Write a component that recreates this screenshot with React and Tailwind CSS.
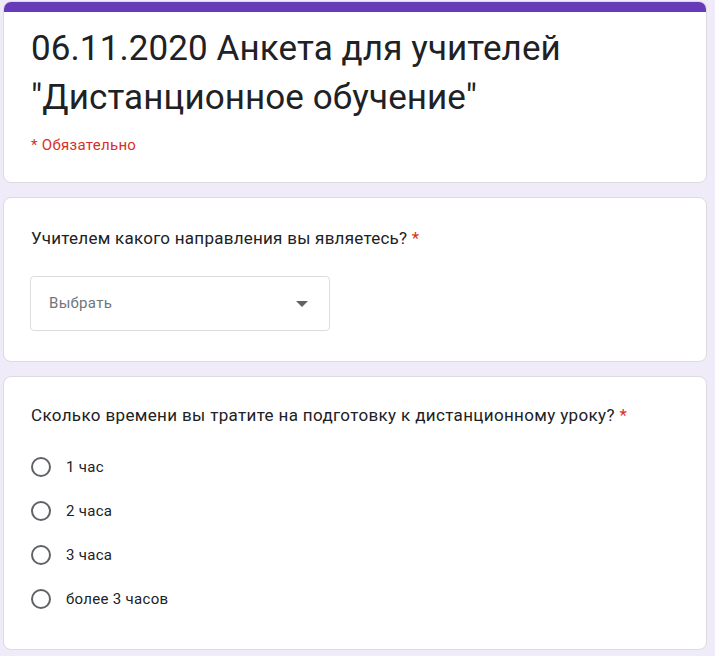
import React from "react";

function Radio({ label }) {
  return (
    <div className="flex items-center h-[44px]">
      <div className="w-[20px] h-[20px] rounded-full border-2 border-[#5f6368] ml-[28px]" />
      <span className="ml-[15px] text-[15px] tracking-[0.3px] text-[#202124]">{label}</span>
    </div>
  );
}

export default function App() {
  return (
    <div
      className="w-[715px] h-[656px] bg-[#f0ebf8] pt-px pl-[3px] pr-[8px] overflow-hidden"
      style={{ fontFamily: "Roboto, 'Noto Sans', sans-serif" }}
    >
      <div className="rounded-lg bg-white border border-[#dadce0] overflow-hidden h-[182px]">
        <div className="h-[10px] bg-[#673ab7]" />
        <div className="pl-[27px] pt-[12px]">
          <h1 className="text-[35px] leading-[49px] text-[#202124] font-normal tracking-[0.1px]">
            06.11.2020 Анкета для учителей
            <br />
            "Дистанционное обучение"
          </h1>
          <div className="mt-[13px] text-[15px] leading-[20px] tracking-[0.3px] text-[#d93025]">* Обязательно</div>
        </div>
      </div>

      <div className="mt-[14px] rounded-lg bg-white border border-[#dadce0] h-[165px] pl-[27px] pt-[28px]">
        <div className="text-[17px] leading-[24px] tracking-[0.25px] text-[#202124]">
          Учителем какого направления вы являетесь? <span className="text-[#d93025]">*</span>
        </div>
        <div className="mt-[26px] w-[300px] h-[55px] border border-[#dadce0] rounded flex items-center justify-between pl-[18px] pr-[21px] -ml-px">
          <span className="text-[15px] tracking-[0.3px] text-[#70757a]">Выбрать</span>
          <svg width="12" height="6" viewBox="0 0 12 6">
            <path d="M0 0 L12 0 L6 6 Z" fill="#5f6368" />
          </svg>
        </div>
      </div>

      <div className="mt-[14px] rounded-lg bg-white border border-[#dadce0] h-[274px] pt-[26px]">
        <div className="pl-[27px] text-[17px] leading-[24px] tracking-[0.35px] text-[#202124]">
          Сколько времени вы тратите на подготовку к дистанционному уроку?{" "}
          <span className="text-[#d93025]">*</span>
        </div>
        <div className="mt-[18px] -ml-[1px]">
          <Radio label="1 час" />
          <Radio label="2 часа" />
          <Radio label="3 часа" />
          <Radio label="более 3 часов" />
        </div>
      </div>
    </div>
  );
}
